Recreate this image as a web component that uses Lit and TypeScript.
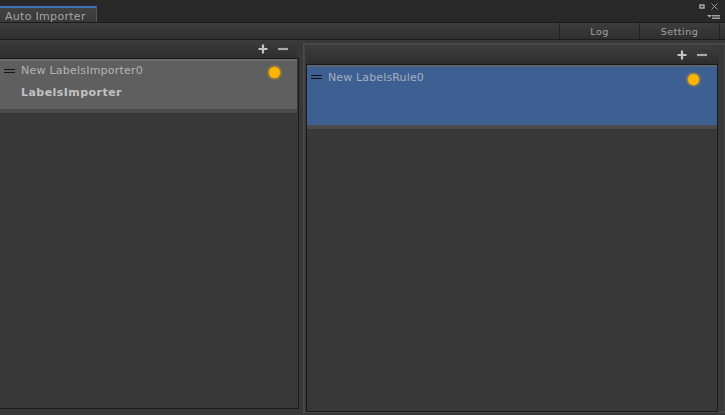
import { LitElement, html, css } from "lit";
import { customElement } from "lit/decorators.js";

const plusMinus = html`<svg class="pm" width="30" height="10" viewBox="0 0 30 10"><path d="M5 0.500v9M0.500 5h9" stroke="#c4c4c4" stroke-width="2.2" fill="none"/><path d="M20 5h10" stroke="#a8a8a8" stroke-width="2.2" fill="none"/></svg>`;

@customElement("app-root")
export class AppRoot extends LitElement {
  static styles = css`
    :host { display: block; width: 725px; height: 415px; overflow: hidden; background: #383838; font-family: "DejaVu Sans", sans-serif; font-size: 10px; color: #b4b4b4; letter-spacing: 0.6px; }
    .strip { height: 22px; background: #282828; display: flex; justify-content: space-between; box-sizing: border-box; padding-top: 6px; }
    .tab { width: 97px; box-sizing: border-box; background: linear-gradient(#414141, #393939); border-top: 2px solid #4273b4; border-right: 1px solid #555; padding: 2px 0 0 5px; font-size: 11px; letter-spacing: 0.3px; color: #a4a4a4; white-space: nowrap; }
    .winicons { margin-top: -6px; }
    .toolbar { height: 18px; box-sizing: border-box; background: linear-gradient(#3d3d3d, #2f2f2f); border-top: 1px solid #1c1c1c; border-bottom: 1px solid #1c1c1c; display: flex; justify-content: flex-end; padding-right: 5px; }
    .tbtn { width: 80px; box-sizing: border-box; border-left: 1px solid #232323; text-align: center; line-height: 17px; font-size: 9.5px; letter-spacing: 0.5px; color: #a4a4a4; }
    .tbtn:last-child { width: 81px; border-right: 1px solid #232323; }
    .main { flex: 1; display: flex; height: 375px; }
    .left { width: 300px; display: flex; flex-direction: column; padding-bottom: 6px; box-sizing: border-box; }
    .right { flex: 1; margin: 3px 0 2px 3px; border: 1px solid #4a4a4a; border-right: none; padding: 2px 0 0 2px; display: flex; flex-direction: column; min-width: 0; box-sizing: border-box; box-shadow: inset 0 0 0 1px #444; }
    .head { height: 18px; flex: none; box-sizing: border-box; display: flex; justify-content: flex-end; align-items: center; background: linear-gradient(#3c3c3c, #2e2e2e); }
    .left .head { padding-right: 9px; margin-right: 3px; }
    .right .head { padding-right: 12px; margin-right: 6px; }
    .pm { display: block; }
    .list { flex: 1; border: 1px solid #1a1a1a; border-left: none; background: #383838; margin-right: 1px; }
    .right .list { border-left: 1px solid #1a1a1a; margin-right: 7px; }
    .item { box-sizing: border-box; position: relative; display: flex; flex-direction: column; }
    .body { padding: 3px 0 0 21px; flex: 1; }
    .l .item { height: 54px; background: #5f5f5f; border-top: 2px solid #6b6b6b; border-bottom: 4px solid #4a4a4a; margin-right: 1px; }
    .r .item { height: 64px; background: #3e5f91; border-top: 2px solid #5c6470; border-bottom: 4px solid #4c4c4c; }
    .name { color: #b4b4b4; font-size: 11px; letter-spacing: 0.23px; white-space: nowrap; }
    .r .body { padding-top: 4px; }
    .r .name { color: #a4afc0; letter-spacing: 0.14px; }
    .type { margin-top: 9px; font-weight: bold; font-size: 11px; letter-spacing: 0.45px; color: #c2c2c2; }
    .grip { position: absolute; left: 4px; top: 8px; width: 11px; height: 2px; border-top: 1px solid #141414; border-bottom: 1px solid #141414; }
    .dot { position: absolute; right: 17px; top: 6px; width: 11px; height: 11px; border-radius: 50%; background: #ffb400; box-shadow: 0 0 2px 1.500px rgba(255, 180, 0, 0.45); }
    .r .dot { right: 18px; top: 7px; }
  `;
  render() {
    return html`
      <div class="strip">
        <div class="tab">Auto Importer</div>
        <svg class="winicons" width="26" height="22" viewBox="0 0 26 22">
          <path d="M1 5h4v3H1z" fill="none" stroke="#aaa" stroke-width="1.400"/>
          <path d="M12.500 3.500l6 6M18.500 3.500l-6 6" stroke="#999" fill="none"/>
          <path d="M8 15h5l-2.500 2.500z" fill="#aaa"/>
          <path d="M13 15.500h8M13 17h8M13 18.500h8" stroke="#aaa" stroke-width="0.900"/>
        </svg>
      </div>
      <div class="toolbar"><div class="tbtn">Log</div><div class="tbtn">Setting</div></div>
      <div class="main">
        <div class="left l">
          <div class="head">${plusMinus}</div>
          <div class="list"><div class="item"><span class="grip"></span><span class="dot"></span><div class="body"><div class="name">New LabelsImporter0</div><div class="type">LabelsImporter</div></div></div></div>
        </div>
        <div class="right r">
          <div class="head">${plusMinus}</div>
          <div class="list"><div class="item"><span class="grip"></span><span class="dot"></span><div class="body"><div class="name">New LabelsRule0</div></div></div></div>
        </div>
      </div>
    `;
  }
}
